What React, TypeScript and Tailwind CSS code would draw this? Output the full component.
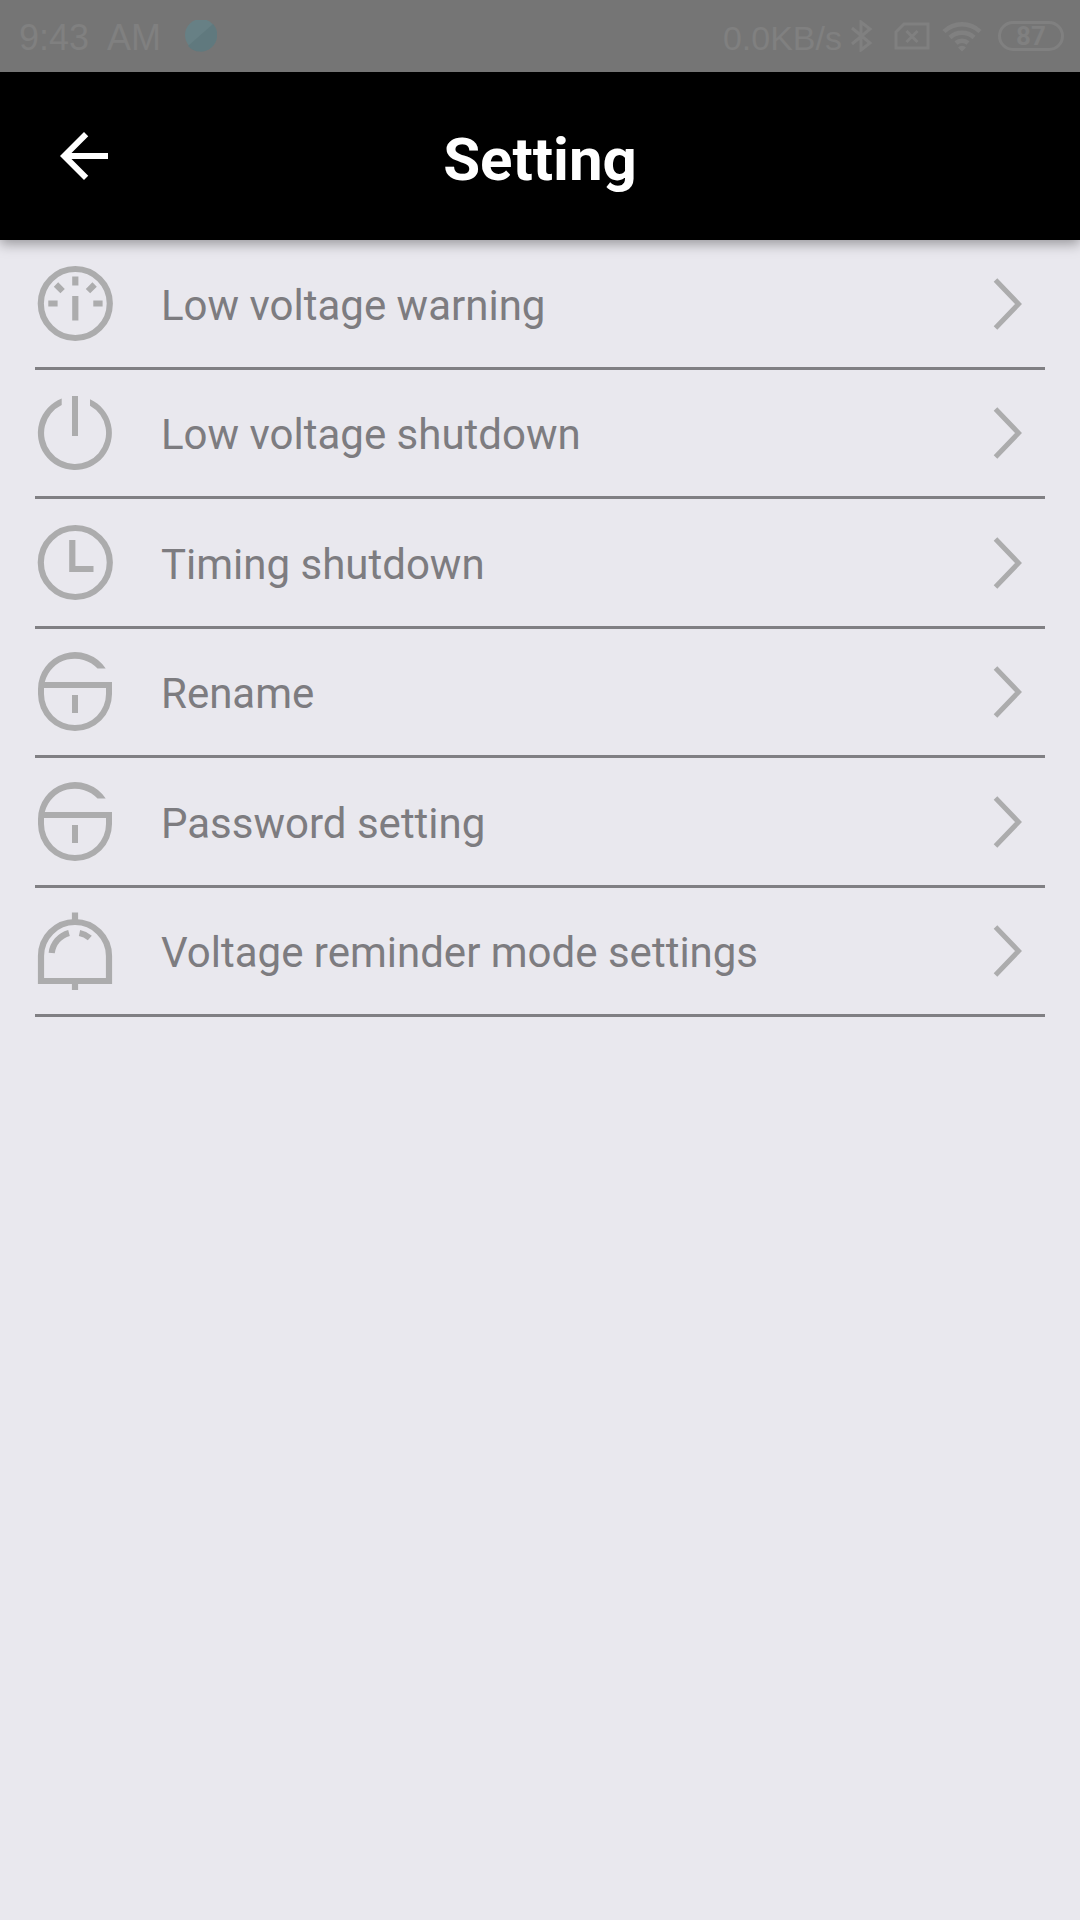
import React from 'react';

const ITEMS = [
  { label: 'Low voltage warning', icon: <GaugeIcon /> },
  { label: 'Low voltage shutdown', icon: <PowerIcon /> },
  { label: 'Timing shutdown', icon: <ClockIcon /> },
  { label: 'Rename', icon: <LockIcon /> },
  { label: 'Password setting', icon: <LockIcon /> },
  { label: 'Voltage reminder mode settings', icon: <BellIcon /> },
];

function GaugeIcon() {
  return (
    <svg className="h-20 w-20 shrink-0" viewBox="0 0 80 80" fill="none" stroke="currentColor" strokeWidth="6.2" aria-hidden="true">
      <circle cx="40.3" cy="39.5" r="34.5" />
      <path d="M40.3 12.5v9M13.3 39.5h9.3M58.3 39.5h9.3M40.3 32v24.5M21 20.5l6.6 6.6M59.6 20.5l-6.6 6.6" />
    </svg>
  );
}

function PowerIcon() {
  return (
    <svg className="h-20 w-20 shrink-0" viewBox="0 0 80 80" fill="currentColor" aria-hidden="true">
      <path d="M26.7 5.5A37 37 0 1 0 55 6.3L55 12.8A31 31 0 1 1 26.7 12z" />
      <path d="M37 3h6v40h-6z" />
    </svg>
  );
}

function ClockIcon() {
  return (
    <svg className="h-20 w-20 shrink-0" viewBox="0 0 80 80" fill="none" stroke="currentColor" strokeWidth="6.2" aria-hidden="true">
      <circle cx="40.3" cy="39.5" r="34.5" />
      <path d="M37.3 17V46H58.5" />
    </svg>
  );
}

function LockIcon() {
  return (
    <svg className="h-20 w-20 shrink-0" viewBox="0 0 80 80" fill="currentColor" fillRule="evenodd" aria-hidden="true">
      <path d="M70.7 16.5A37 37 0 0 0 3 37V42A37 37 0 0 0 77 42V30H9.8A31 31 0 0 1 62.5 16.5zM9 36H71V42A31 31 0 0 1 9 42z" />
      <path d="M37 43h6v18h-6z" />
    </svg>
  );
}

function BellIcon() {
  return (
    <svg className="h-20 w-20 shrink-0" viewBox="0 0 80 80" fill="none" stroke="currentColor" strokeWidth="6.2" aria-hidden="true">
      <path d="M6 70V45a34 34 0 0 1 68 0V70z" />
      <path d="M40 1.5v8M40 70v9" />
      <path d="M16.7 42A23.5 23.5 0 0 1 34 22M44.5 22A23.5 23.5 0 0 1 54.8 27" />
    </svg>
  );
}

function StatusBar() {
  return (
    <div className="relative z-10 flex h-18 items-center justify-between bg-[#757575] pr-4 pl-[19px] font-['Liberation_Sans',Arial,sans-serif] text-[#808080]">
      <div className="flex items-center">
        <span className="pt-1 text-[36px] leading-10 whitespace-pre">9:43  AM</span>
        <svg className="ml-6 h-8 w-8" viewBox="0 0 32 32" aria-hidden="true">
          <circle cx="16" cy="15" r="16" fill="#678085" />
          <path d="M3 26L28 4A16 16 0 0 1 3 26z" fill="#60797e" />
        </svg>
      </div>
      <div className="flex items-center">
        <span className="pt-1 text-[34px] leading-10">0.0KB/s</span>
        <svg className="ml-2 h-8 w-6" viewBox="0 0 24 32" fill="none" stroke="currentColor" strokeWidth="3" aria-hidden="true">
          <path d="M2 8L20 23L11 30V2L20 9L2 24" />
        </svg>
        <svg className="ml-5 h-8 w-9" viewBox="0 0 36 32" fill="none" stroke="currentColor" strokeWidth="3" aria-hidden="true">
          <path d="M10 4H34V28H2V12z" />
          <path d="M12.5 11L23.5 22M23.5 11L12.5 22" />
        </svg>
        <svg className="ml-3 h-8 w-10" viewBox="0 0 40 32" fill="none" stroke="currentColor" strokeWidth="4.5" aria-hidden="true">
          <path d="M2 11.5A26 26 0 0 1 38 11.5M8 17.5A17.5 17.5 0 0 1 32 17.5M14 23A9 9 0 0 1 26 23" />
          <path d="M16 27.5a5.5 5.5 0 0 1 8 0l-4 4z" fill="currentColor" stroke="none" />
        </svg>
        <span className="ml-4 flex h-[30px] w-[66px] items-center justify-center rounded-full border-3 border-current font-[Roboto,sans-serif] text-[26px] font-bold">
          87
        </span>
      </div>
    </div>
  );
}

export default function App() {
  return (
    <div className="min-h-screen bg-[#e9e8ee] font-[Roboto,sans-serif]">
      <StatusBar />

      {/* Title bar */}
      <header className="grid h-[168px] grid-cols-[1fr_auto_1fr] items-center bg-black px-12 text-white shadow-[0_4px_12px_rgba(0,0,0,0.35)]">
        <button type="button" aria-label="Back" className="justify-self-start">
          <svg className="h-18 w-18" viewBox="0 0 24 24" fill="currentColor" aria-hidden="true">
            <path d="M20 11H7.83l5.59-5.59L12 4l-8 8 8 8 1.41-1.41L7.83 13H20v-2z" />
          </svg>
        </button>
        <h1 className="pt-2 text-[60px] leading-18 font-bold">Setting</h1>
      </header>

      {/* Settings list */}
      <ul className="px-[35px]">
        {ITEMS.map((item) => (
          <li key={item.label} className="border-b-3 border-[#807f83] odd:h-[130px] even:h-[129px]">
            <button type="button" className="flex h-full w-full items-center pr-[23px] text-left text-[#acacad]">
              {item.icon}
              <span className="ml-[46px] grow pt-1 text-[42px] leading-12 text-[#7d7c80]">{item.label}</span>
              <svg className="h-14 w-[30px] shrink-0" viewBox="0 0 30 56" fill="none" stroke="currentColor" strokeWidth="5" aria-hidden="true">
                <path d="M3.5 4L26.5 28L3.5 52" />
              </svg>
            </button>
          </li>
        ))}
      </ul>
    </div>
  );
}
